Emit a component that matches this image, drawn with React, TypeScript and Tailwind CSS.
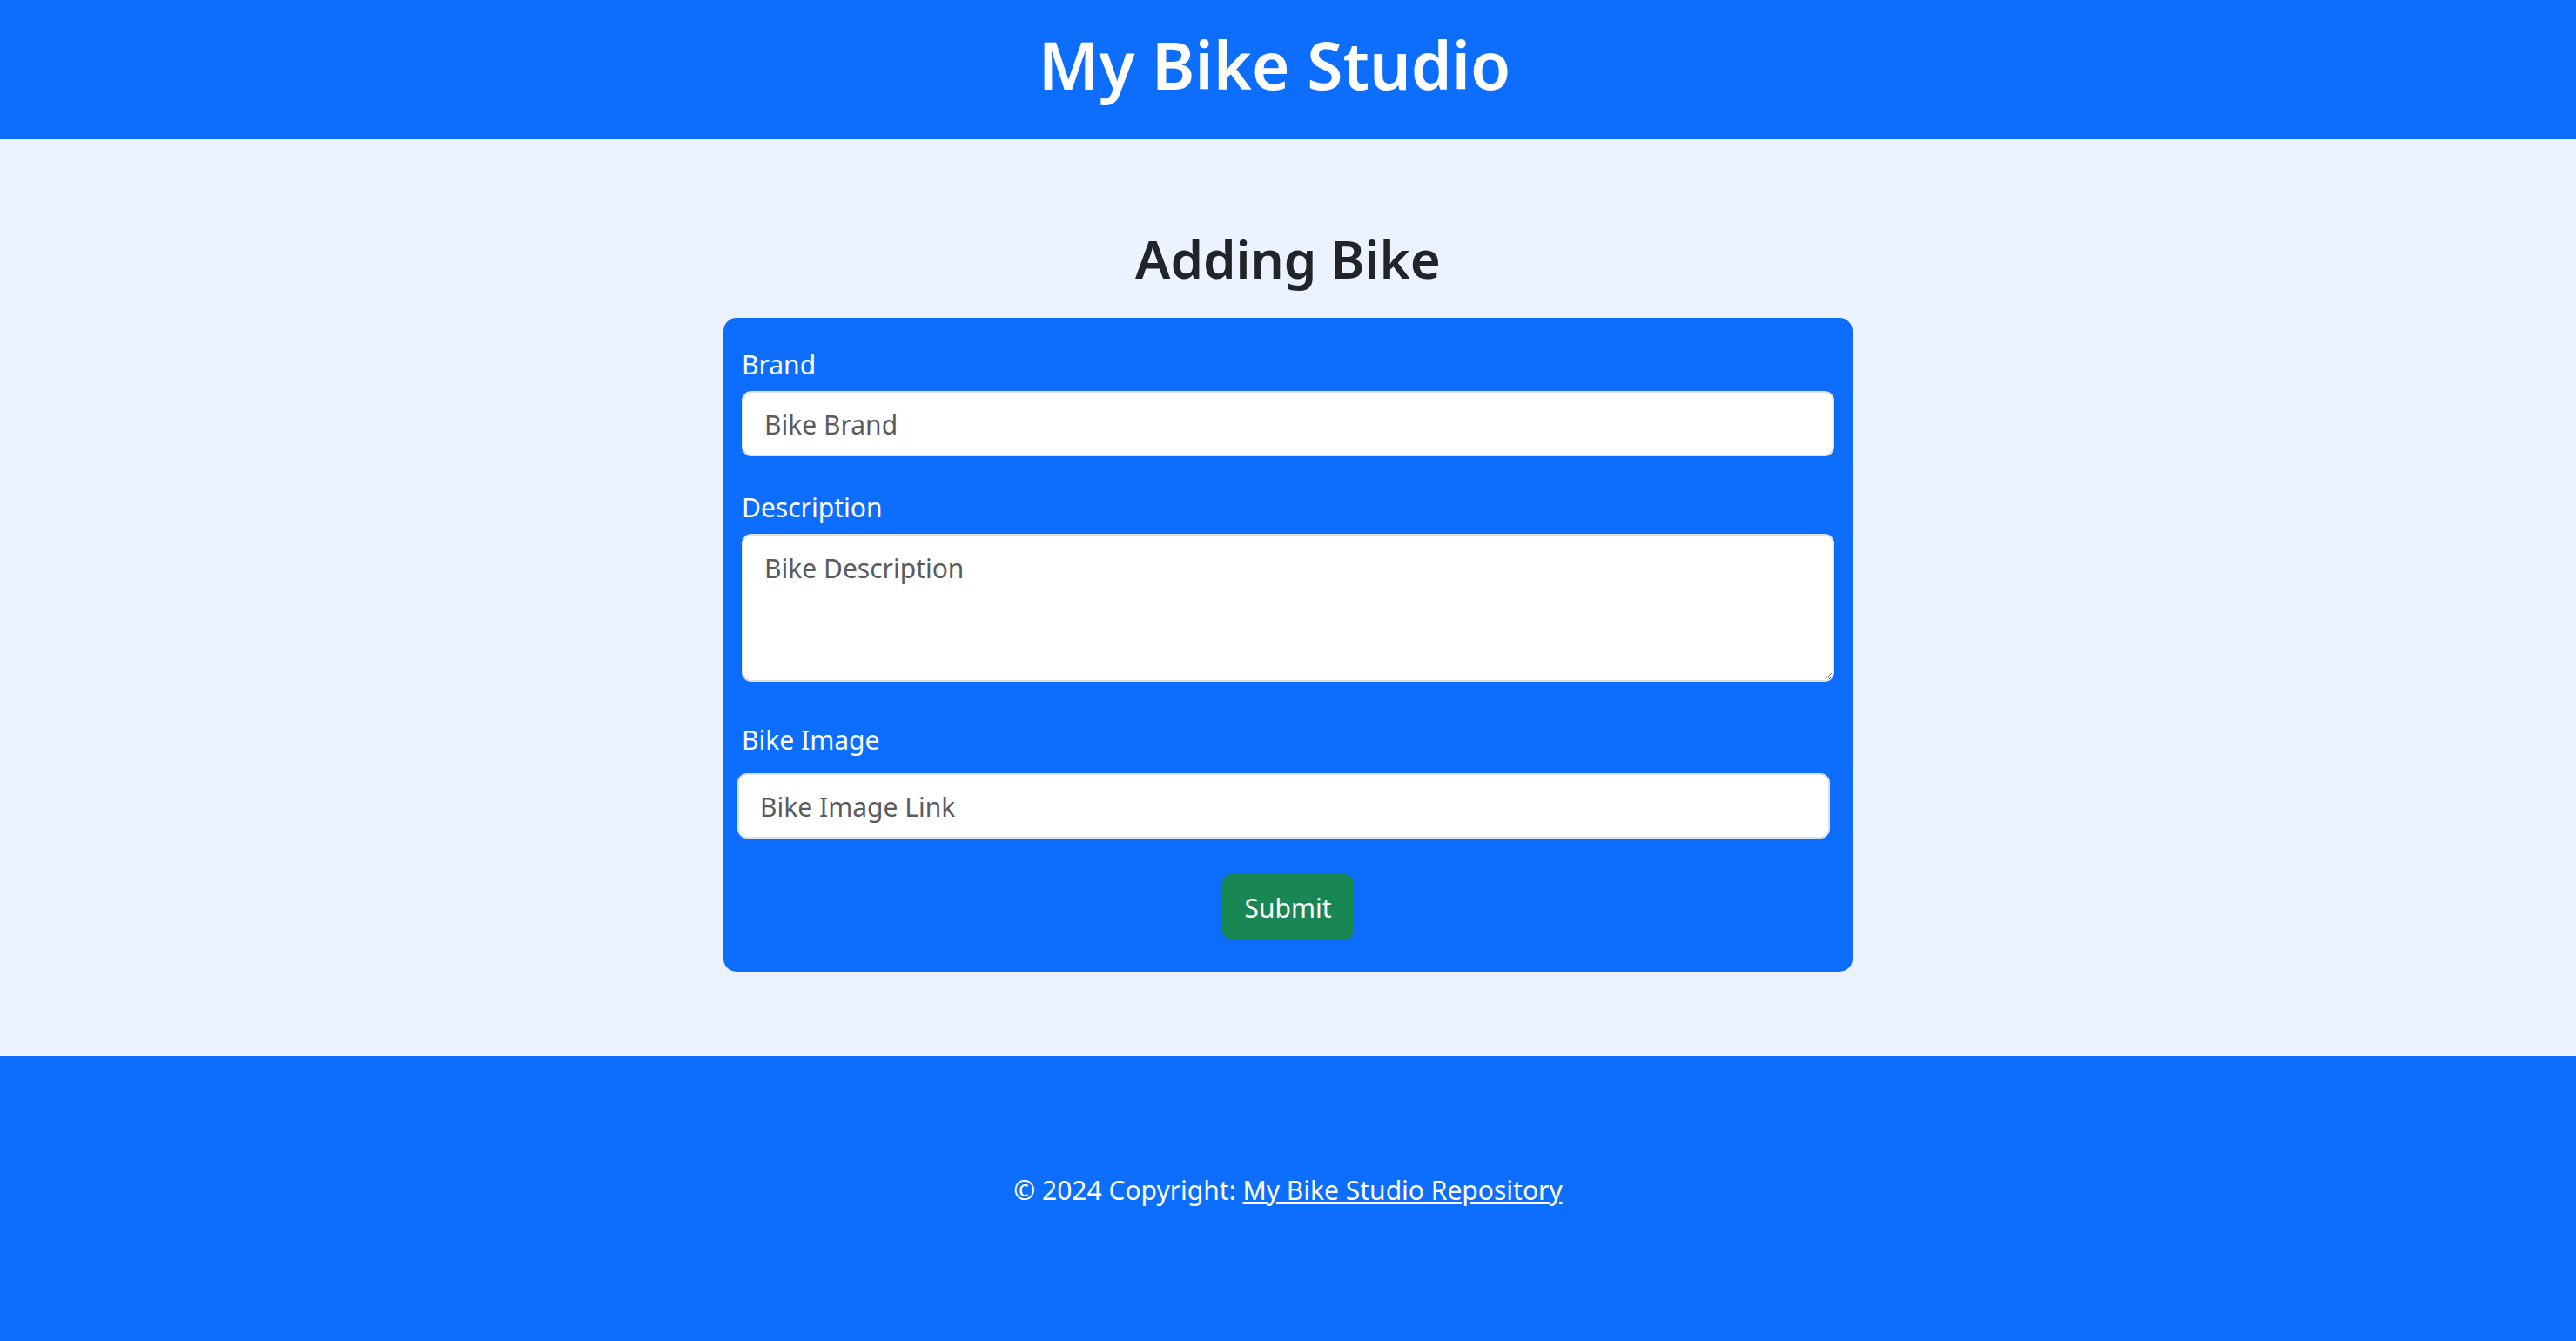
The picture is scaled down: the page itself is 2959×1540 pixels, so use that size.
export default function App() {
  return (
    <div className="min-h-screen flex flex-col font-['Noto_Sans',sans-serif] text-[#212529]">
      <header className="h-[160px] bg-[#0d6efd] flex items-center justify-center">
        <h1 className="text-[75px] font-semibold leading-[1.2] text-white mr-[31px] mb-[12px]">My Bike Studio</h1>
      </header>

      <main className="h-[1053px] bg-[#ecf2ff] flex flex-col items-center">
        <h2 className="mt-[101px] mb-[32px] text-[60px] font-semibold leading-[1.2]">Adding Bike</h2>

        <form className="w-[1297px] bg-[#0d6efd] rounded-[15px] px-[21px] pt-[31px] pb-[37px] flex flex-col">
          <label className="text-[30px] leading-[45px] text-white mb-[8px]">Brand</label>
          <input
            type="text"
            placeholder="Bike Brand"
            className="h-[75px] bg-white border-2 border-[#dee2e6] rounded-[11px] px-[24px] pt-[2px] text-[30px] placeholder:text-[#595c5f] outline-none"
          />

          <label className="mt-[36px] text-[30px] leading-[45px] text-white mb-[8px]">Description</label>
          <textarea
            placeholder="Bike Description"
            className="h-[170px] bg-white border-2 border-[#dee2e6] rounded-[11px] px-[24px] pt-[15px] pb-[11px] text-[30px] leading-[45px] placeholder:text-[#595c5f] outline-none"
          />

          <label className="mt-[44px] text-[30px] leading-[45px] text-white mb-[16px]">Bike Image</label>
          <input
            type="text"
            placeholder="Bike Image Link"
            className="h-[75px] ml-[-5px] mr-[5px] bg-white border-2 border-[#dee2e6] rounded-[11px] px-[24px] pt-[2px] text-[30px] placeholder:text-[#595c5f] outline-none"
          />

          <div className="mt-[41px] flex justify-center">
            <button
              type="button"
              className="w-[151px] h-[75px] bg-[#198754] border-2 border-[#198754] rounded-[11px] text-white text-[30px] leading-[45px] pt-[2px]"
            >
              Submit
            </button>
          </div>
        </form>
      </main>

      <footer className="h-[327px] bg-[#0d6efd] pt-[131px] text-center text-white text-[30px] leading-[45px]">
        © 2024 Copyright:{' '}
        <a href="#" className="underline text-white">
          My Bike Studio Repository
        </a>
      </footer>
    </div>
  );
}
